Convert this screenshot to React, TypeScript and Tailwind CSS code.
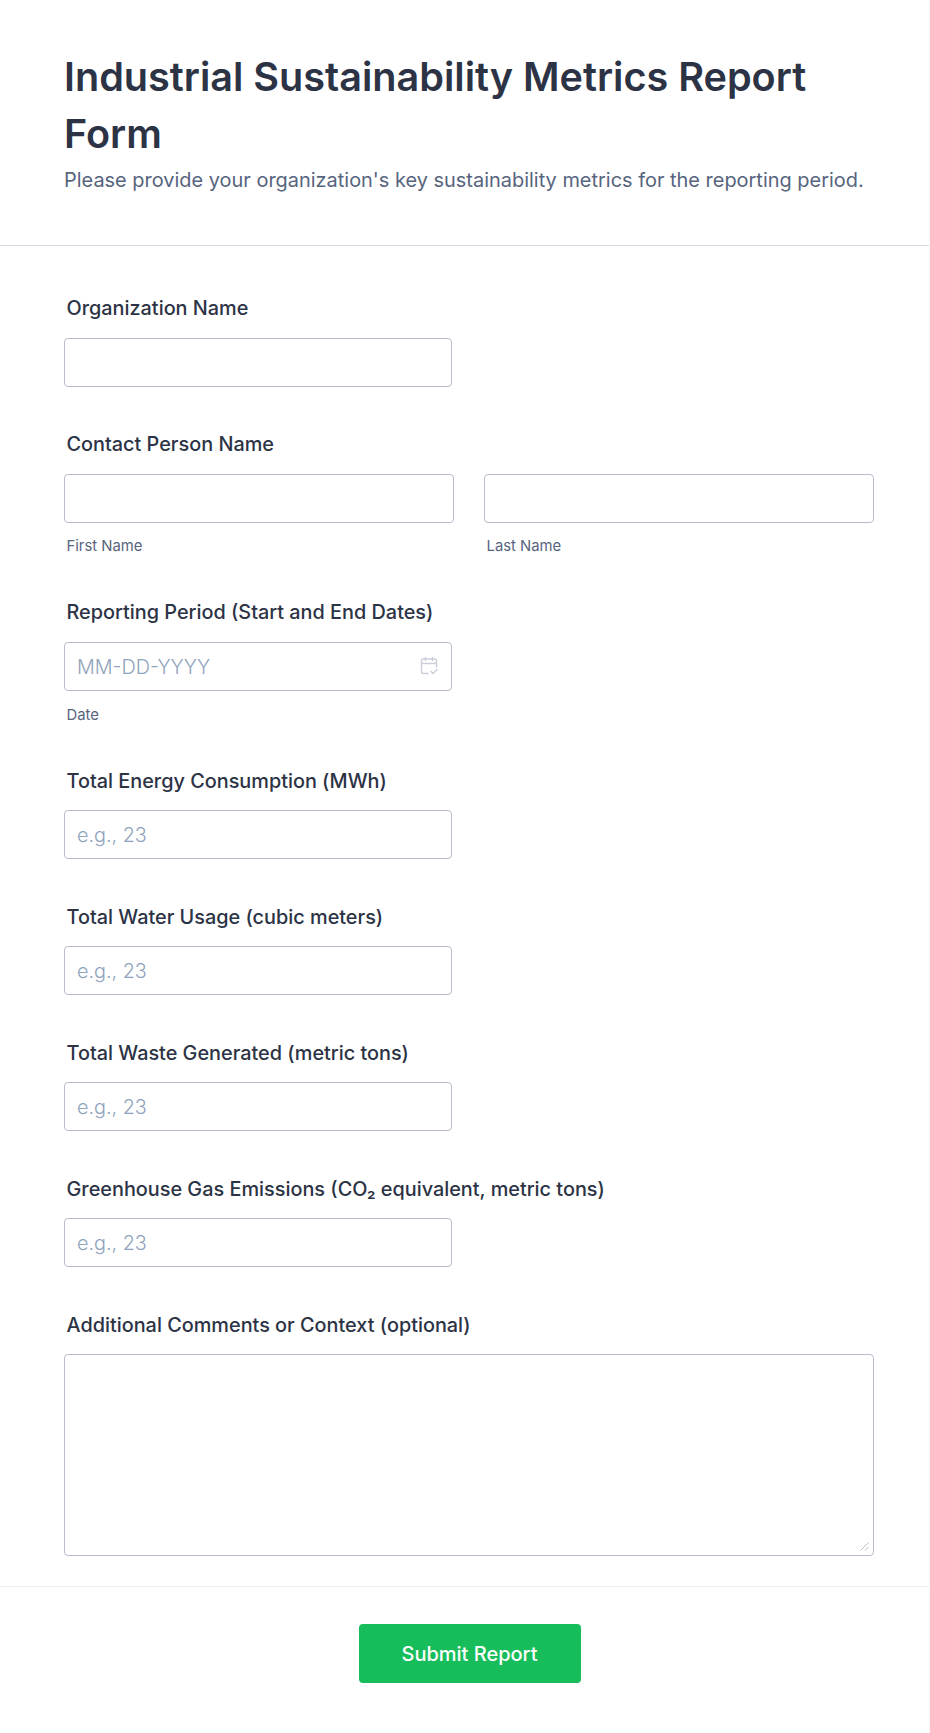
const font = "[font-family:Inter,'Liberation_Sans',sans-serif]";

function Label({ children }: { children: React.ReactNode }) {
  return <label className="block h-[28px] pl-[2.5px] text-[19.85px] leading-[28px] font-medium text-[#2c3345]">{children}</label>;
}

function Sub({ children, top = "mt-[14px]" }: { children: React.ReactNode; top?: string }) {
  return <div className={`${top} h-[18px] pl-[2.5px] text-[14.85px] leading-[18px] text-[#57647e]`}>{children}</div>;
}

const inputClass =
  "block h-[49px] w-full rounded-[4px] border border-[#b8bcce] bg-white px-[12px] text-[19.8px] font-light text-[#2c3345] outline-none placeholder:text-[#8fa3bc]";

function NumberField({ label }: { label: React.ReactNode }) {
  return (
    <div className="mb-[44px]">
      <Label>{label}</Label>
      <input className={`mt-[15px] !w-[388px] ${inputClass}`} placeholder="e.g., 23" />
    </div>
  );
}

export default function App() {
  return (
    <div className={`min-h-[1733px] border-r border-[#f7f7fa] bg-white ${font}`}>
      <header className="h-[246px] border-b border-[#d8dae5] pr-[55px] pl-[64px] pt-[49px]">
        <h1 className="text-[39.6px] leading-[57.2px] font-semibold text-[#2c3345]">Industrial Sustainability Metrics Report Form</h1>
        <p className="mt-[2px] text-[19.95px] leading-[30px] text-[#57647e]">Please provide your organization's key sustainability metrics for the reporting period.</p>
      </header>
      <main className="pr-[54px] pl-[64px] pt-[48px]">
        <div className="mb-[43px]">
          <Label>Organization Name</Label>
          <input className={`mt-[16px] !w-[388px] ${inputClass}`} />
        </div>
        <div className="mb-[43px]">
          <Label>Contact Person Name</Label>
          <div className="mt-[16px] grid grid-cols-2 gap-[30px] pr-[1px]">
            <div>
              <input className={inputClass} />
              <Sub>First Name</Sub>
            </div>
            <div>
              <input className={inputClass} />
              <Sub>Last Name</Sub>
            </div>
          </div>
        </div>
        <div className="mb-[43px]">
          <Label>Reporting Period (Start and End Dates)</Label>
          <div className="relative mt-[16px] w-[388px]">
            <input className={inputClass} placeholder="MM-DD-YYYY" />
            <svg className="absolute top-[14px] right-[13px] h-[20px] w-[20px]" viewBox="0 0 20 20" fill="none" stroke="#c9ced9" strokeWidth="1.4" strokeLinecap="round" strokeLinejoin="round">
              <path d="M9 17.5H4.5a2 2 0 0 1-2-2V5a2 2 0 0 1 2-2h11a2 2 0 0 1 2 2v6" />
              <path d="M2.5 7.5h15M6.5 1.5v3M13.5 1.5v3" />
              <path d="M12 15.5l2 2 4-4" />
            </svg>
          </div>
          <Sub top="mt-[15px]">Date</Sub>
        </div>
        <NumberField label="Total Energy Consumption (MWh)" />
        <NumberField label="Total Water Usage (cubic meters)" />
        <NumberField label="Total Waste Generated (metric tons)" />
        <NumberField label="Greenhouse Gas Emissions (CO₂ equivalent, metric tons)" />
        <div>
          <Label>Additional Comments or Context (optional)</Label>
          <div className="relative mt-[15px] pr-[1px]">
            <textarea className="block h-[202px] w-full resize-none rounded-[4px] border border-[#b8bcce] bg-white outline-none" />
            <svg className="absolute right-[6px] bottom-[5px] h-[9px] w-[9px]" viewBox="0 0 9 9" fill="none" stroke="#b9bdc9" strokeWidth="1">
              <path d="M0.5 8.5L8.5 0.5M5 8.5L8.5 5" />
            </svg>
          </div>
        </div>
      </main>
      <footer className="mt-[30px] flex justify-center border-t border-[#eceef3] pt-[37px] pr-[54px] pl-[64px]">
        <button className="h-[59px] w-[222px] rounded-[4px] bg-[#18bd5b] text-[20px] font-medium text-white">Submit Report</button>
      </footer>
    </div>
  );
}
